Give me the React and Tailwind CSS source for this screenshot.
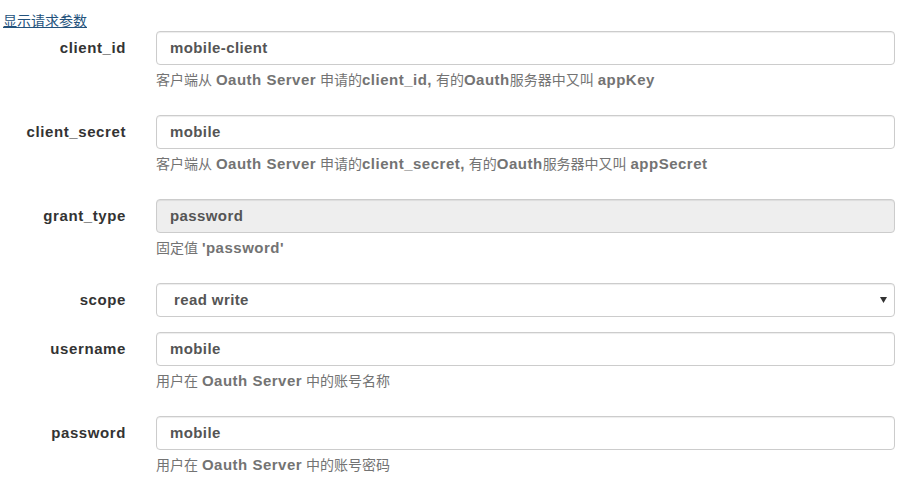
import React from "react";

const B = ({ children }) => (
  <span className="font-bold text-[15px] tracking-[0.5px]">{children}</span>
);

function Field({ label, value, disabled, select, help }) {
  return (
    <div className="flex mb-[15px]">
      <div className="w-[141px] pr-[15px] h-[34px] flex items-center justify-end shrink-0">
        <span className="font-bold text-[15px] tracking-[0.6px] text-[#333]">{label}</span>
      </div>
      <div className="flex-1 pl-[15px] pr-[7px]">
        <div
          className={
            "h-[34px] border border-[#ccc] rounded-[4px] shadow-[inset_0_1px_1px_rgba(0,0,0,0.075)] flex items-center " +
            (disabled ? "bg-[#eee] " : "bg-white ") +
            (select ? "pl-[17px] pr-[6px]" : "px-[13px]")
          }
        >
          <span className="flex-1 font-bold text-[15px] tracking-[0.4px] text-[#555]">{value}</span>
          {select && (
            <svg width="7" height="6" viewBox="0 0 7 6" className="mr-[1px]">
              <path d="M0 0 L7 0 L3.5 6 Z" fill="#333" />
            </svg>
          )}
        </div>
        {help && (
          <div className="mt-[5px] mb-[10px] leading-[20px] text-[14px] text-[#737373]">{help}</div>
        )}
      </div>
    </div>
  );
}

export default function App() {
  return (
    <div
      className="w-[902px] h-[479px] bg-white overflow-hidden"
      style={{ fontFamily: '"Liberation Sans", "Noto Sans CJK SC", sans-serif' }}
    >
      <div className="pt-[11px] pl-[3px] leading-[20px] text-[14px]">
        <a href="#" className="text-[#23527c] underline">显示请求参数</a>
      </div>
      <Field
        label="client_id"
        value="mobile-client"
        help={
          <>
            客户端从 <B>Oauth Server</B> 申请的<B>client_id,</B> 有的<B>Oauth</B>服务器中又叫 <B>appKey</B>
          </>
        }
      />
      <Field
        label="client_secret"
        value="mobile"
        help={
          <>
            客户端从 <B>Oauth Server</B> 申请的<B>client_secret,</B> 有的<B>Oauth</B>服务器中又叫 <B>appSecret</B>
          </>
        }
      />
      <Field
        label="grant_type"
        value="password"
        disabled
        help={
          <>
            固定值 <B>'password'</B>
          </>
        }
      />
      <Field label="scope" value="read write" select />
      <Field
        label="username"
        value="mobile"
        help={
          <>
            用户在 <B>Oauth Server</B> 中的账号名称
          </>
        }
      />
      <Field
        label="password"
        value="mobile"
        help={
          <>
            用户在 <B>Oauth Server</B> 中的账号密码
          </>
        }
      />
    </div>
  );
}
